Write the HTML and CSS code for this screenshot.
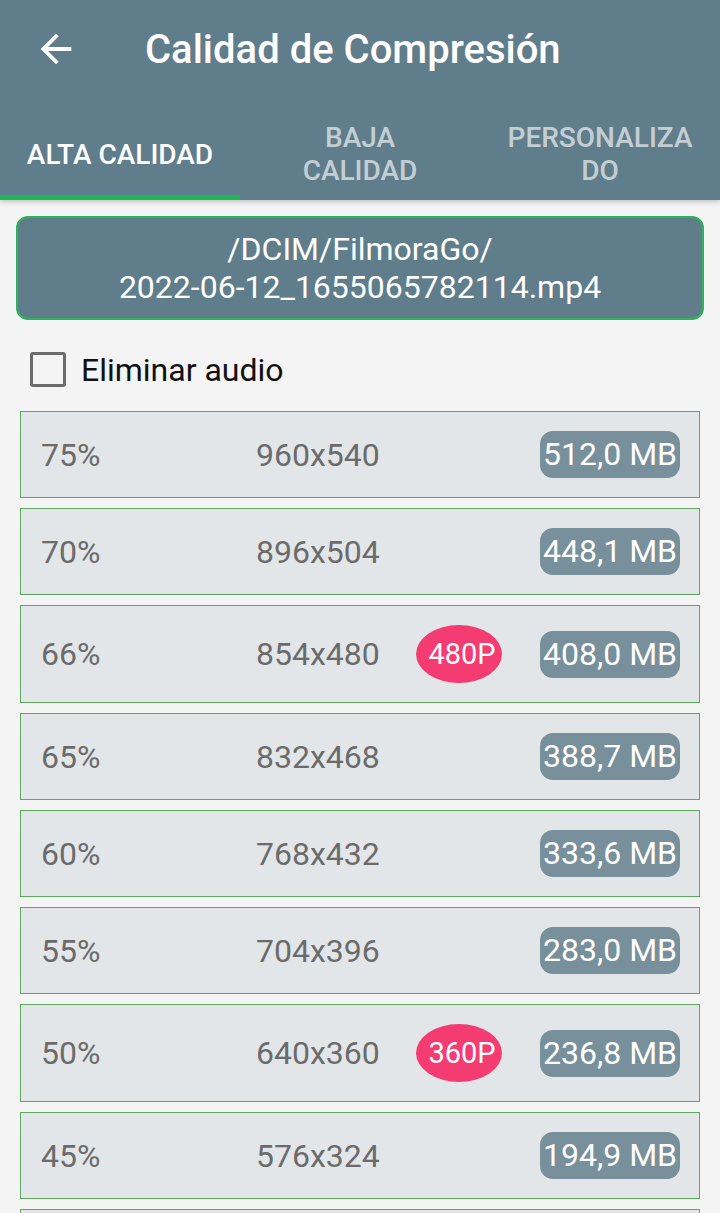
FILE: index.html
```html
<!DOCTYPE html>
<html lang="es">
<head>
    <meta charset="UTF-8">
    <meta name="viewport" content="width=device-width, initial-scale=1.0">
    <title>Calidad de Compresión</title>
    <link rel="stylesheet" href="styles.css">
</head>
<body>
    <header class="appbar">
        <div class="toolbar">
            <button class="back-btn" aria-label="Atrás">
                <svg viewBox="0 0 24 24" width="46" height="46">
                    <path d="M20 11H7.83l5.59-5.59L12 4l-8 8 8 8 1.41-1.41L7.83 13H20v-2z" fill="#fff"/>
                </svg>
            </button>
            <h1 class="title">Calidad de Compresión</h1>
        </div>
        <nav class="tabs">
            <div class="tab active"><span>ALTA CALIDAD</span></div>
            <div class="tab"><span>BAJA<br>CALIDAD</span></div>
            <div class="tab"><span>PERSONALIZA<br>DO</span></div>
        </nav>
    </header>

    <main class="content">
        <div class="file-path">/DCIM/FilmoraGo/<br>2022-06-12_1655065782114.mp4</div>

        <label class="audio-option">
            <span class="checkbox"></span>
            <span>Eliminar audio</span>
        </label>

        <div class="quality-list" id="qualityList">
            <div class="quality-row">
                <span class="percent">75%</span>
                <span class="resolution">960x540</span>
                <span class="badge-cell"></span>
                <span class="size">512,0 MB</span>
            </div>
            <div class="quality-row">
                <span class="percent">70%</span>
                <span class="resolution">896x504</span>
                <span class="badge-cell"></span>
                <span class="size">448,1 MB</span>
            </div>
            <div class="quality-row">
                <span class="percent">66%</span>
                <span class="resolution">854x480</span>
                <span class="badge-cell"><span class="badge">480P</span></span>
                <span class="size">408,0 MB</span>
            </div>
            <div class="quality-row">
                <span class="percent">65%</span>
                <span class="resolution">832x468</span>
                <span class="badge-cell"></span>
                <span class="size">388,7 MB</span>
            </div>
            <div class="quality-row">
                <span class="percent">60%</span>
                <span class="resolution">768x432</span>
                <span class="badge-cell"></span>
                <span class="size">333,6 MB</span>
            </div>
            <div class="quality-row">
                <span class="percent">55%</span>
                <span class="resolution">704x396</span>
                <span class="badge-cell"></span>
                <span class="size">283,0 MB</span>
            </div>
            <div class="quality-row">
                <span class="percent">50%</span>
                <span class="resolution">640x360</span>
                <span class="badge-cell"><span class="badge">360P</span></span>
                <span class="size">236,8 MB</span>
            </div>
            <div class="quality-row">
                <span class="percent">45%</span>
                <span class="resolution">576x324</span>
                <span class="badge-cell"></span>
                <span class="size">194,9 MB</span>
            </div>
            <!-- next row, scrolled below the fold -->
            <div class="quality-row placeholder"></div>
        </div>
    </main>
</body>
</html>
```

FILE: styles.css
```css
body {
    font-family: Roboto, "Noto Sans", Arial, sans-serif;
    margin: 0;
    background-color: #f3f4f3;
    overflow: hidden;
}
.appbar {
    background-color: #607d8b;
    box-shadow: 0px 2px 5px rgba(0, 0, 0, 0.2);
    position: relative;
}
.toolbar {
    height: 98px;
    display: flex;
    align-items: center;
}
.back-btn {
    width: 46px;
    height: 46px;
    margin-left: 33px;
    padding: 0;
    border: none;
    background: none;
    display: flex;
}
.title {
    color: #fff;
    font-size: 40px;
    font-weight: 500;
    margin: 0 0 0 66px;
}
.tabs {
    display: flex;
    height: 102px;
}
.tab {
    flex: 1;
    display: flex;
    align-items: center;
    justify-content: center;
    text-align: center;
    font-size: 28px;
    font-weight: 500;
    line-height: 33px;
    color: rgba(255, 255, 255, 0.65);
    border-bottom: 5px solid transparent;
    padding-top: 15px;
}
.tab.active {
    color: #fff;
    border-bottom-color: #1db954;
}
.content {
    padding: 16px 16px 0;
}
.file-path {
    background-color: #607d8b;
    border: 2px solid #2cb35a;
    border-radius: 12px;
    color: #fff;
    font-size: 32px;
    line-height: 38px;
    text-align: center;
    padding: 12px 10px;
}
.audio-option {
    display: flex;
    align-items: center;
    height: 83px;
    padding: 8px 0 0 14px;
    font-size: 32px;
    color: #111;
}
.checkbox {
    width: 30px;
    height: 29px;
    border: 3px solid #6b6b6b;
    border-radius: 3px;
    margin-right: 15px;
}
.quality-list {
    display: flex;
    flex-direction: column;
    gap: 10px;
    margin: 0 4px;
}
.quality-row {
    display: grid;
    grid-template-columns: 215px 160px 1fr auto;
    align-items: center;
    background-color: #e2e6e8;
    border: 1px solid #5ea85e;
    padding: 19px 19px 19px 20px;
    font-size: 32px;
    color: #6b6b6b;
}
.quality-row.placeholder {
    height: 47px;
}
.badge {
    display: inline-flex;
    align-items: center;
    justify-content: center;
    width: 86px;
    height: 58px;
    border-radius: 50%;
    background-color: #f43c73;
    color: #fff;
    font-size: 29px;
    padding-left: 6px;
    box-sizing: border-box;
}
.size {
    background-color: #78909c;
    color: #fff;
    border-radius: 13px;
    height: 47px;
    line-height: 47px;
    padding: 0 3px;
}
```
